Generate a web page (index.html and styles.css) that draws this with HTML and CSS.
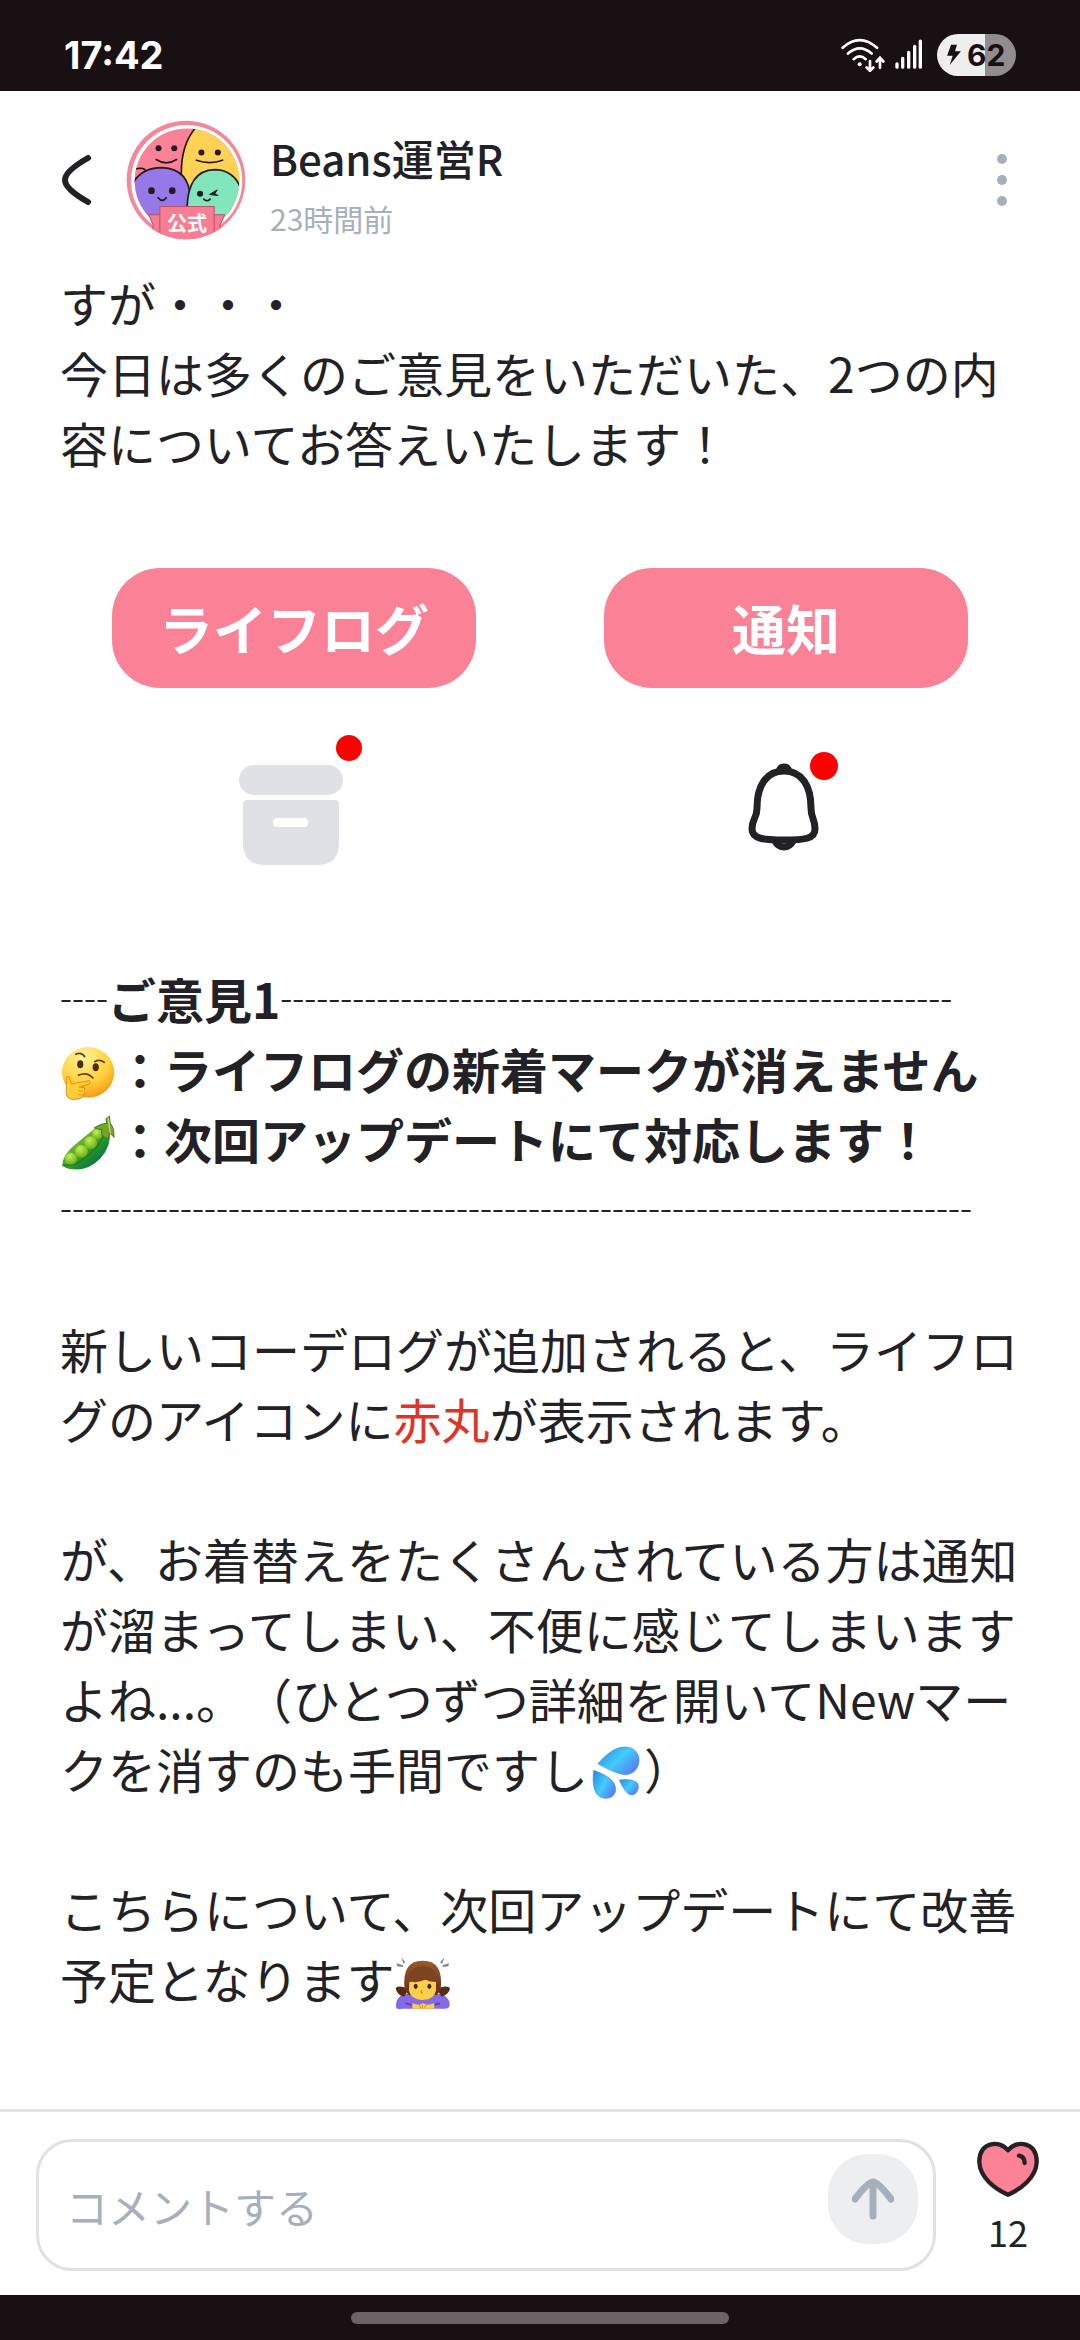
FILE: index.html
```html
<!DOCTYPE html>
<html lang="ja">
<head>
<meta charset="utf-8">
<meta name="viewport" content="width=device-width, initial-scale=1">
<title>Beans運営R</title>
<link rel="stylesheet" href="styles.css">
</head>
<body>
<div class="status">
  <span class="clock">17:42</span>
  <div class="status-icons">
    <svg class="wifi" viewBox="0 0 132 104" fill="none" stroke="#fff" stroke-width="8" stroke-linecap="round" aria-hidden="true">
      <path d="M5 32Q56-14 108 32M21 49Q56 18 92 49M38 66Q56 49 74 66"/>
      <circle cx="56" cy="81" r="6" fill="#fff" stroke="none"/>
      <g stroke="#191014" stroke-width="15"><path d="M87 72V98M117 92V66"/></g>
      <path d="M87 72V100M77 91L87 101L97 91M117 92V64M107 73L117 62L127 73"/>
    </svg>
    <svg class="signal" viewBox="0 0 84 92" fill="none" stroke="#fff" stroke-width="10" stroke-linecap="round" aria-hidden="true">
      <path d="M6 74V84M23 58V84M41 40V84M59 22V84M76 6V84"/>
    </svg>
    <div class="battery">
      <svg class="bolt" viewBox="0 0 42 64" aria-hidden="true"><path d="M12 2H30L24 22H42L8 64L17 36H0Z" fill="#191014"/></svg>
      <span>62</span>
    </div>
  </div>
</div>

<header class="header">
  <button class="icon-button back" type="button" aria-label="戻る">
    <svg viewBox="0 0 30 52" fill="none" stroke="#222226" stroke-width="6" stroke-linecap="round" stroke-linejoin="round"><path d="M26 4Q3 17 3 26T26 48"/></svg>
  </button>
  <svg class="avatar" viewBox="51 34 356 358" role="img" aria-label="Beans公式アイコン">
    <defs>
      <clipPath id="face"><circle cx="232" cy="215" r="156"/></clipPath>
      <clipPath id="disc"><circle cx="229" cy="213" r="177"/></clipPath>
    </defs>
    <circle cx="229" cy="213" r="177" fill="#f2899b"/>
    <circle cx="231" cy="215" r="166" fill="#fff"/>
    <g clip-path="url(#face)" stroke="#221b22" stroke-width="5">
      <rect x="60" y="40" width="340" height="340" fill="#fb8296" stroke="none"/>
      <path d="M262 52Q208 110 216 220L250 300H420V40Z" fill="#ffd154"/>
      <path d="M60 184Q108 170 110 190Q110 210 80 214" fill="#fb8296"/>
      <path d="M60 250Q80 176 158 176Q240 180 242 270V400H60Z" fill="#9678e8"/>
      <path d="M232 300Q234 184 314 182Q380 182 400 260V400H232Z" fill="#82e6bc"/>
    </g>
    <g fill="#221b22">
      <circle cx="147" cy="118" r="9"/><circle cx="194" cy="118" r="9"/>
      <circle cx="275" cy="131" r="9"/><circle cx="324" cy="131" r="9"/>
      <circle cx="126" cy="245" r="10"/><circle cx="188" cy="245" r="10"/>
      <circle cx="271" cy="254" r="9"/>
      <path d="M300 256L322 243L314 254L324 259Z" stroke="#221b22" stroke-width="3" stroke-linejoin="round"/>
    </g>
    <path d="M140 152Q170 172 201 152M260 154Q300 168 338 154M146 266Q158 282 170 266M282 270Q292 280 301 270" fill="none" stroke="#221b22" stroke-width="5" stroke-linecap="round"/>
    <g clip-path="url(#disc)" fill="#f77d92" stroke="#b95068" stroke-width="3">
      <path d="M118 317H160V400H110L132 350Z"/>
      <path d="M344 317H302V400H352L330 350Z"/>
      <path d="M151 292H313V400H151Z"/>
    </g>
    <text class="avatar-text" x="232" y="364" text-anchor="middle">公式</text>
  </svg>
  <div class="author">
    <h1 class="name">Beans運営R</h1>
    <time class="time">23時間前</time>
  </div>
  <button class="icon-button more" type="button" aria-label="メニュー">
    <svg viewBox="0 0 12 54" fill="#a6afbc"><circle cx="6" cy="6" r="5"/><circle cx="6" cy="27" r="5"/><circle cx="6" cy="48" r="5"/></svg>
  </button>
</header>

<main class="post">
  <p>すが・・・<br>今日は多くのご意見をいただいた、2つの内容についてお答えいたします！</p>

  <div class="topics">
    <div class="topic">
      <div class="pill">ライフログ</div>
      <svg class="topic-icon" viewBox="0 0 160 160" fill="#e0e1e5" aria-hidden="true">
        <rect x="25" y="37" width="104" height="30" rx="15"/>
        <path d="M33 72H121Q125 72 125 76V115Q125 137 103 137H51Q29 137 29 115V76Q29 72 33 72Z"/>
        <rect x="59" y="90" width="35" height="9" rx="4" fill="#fff"/>
        <circle cx="135" cy="20" r="13" fill="#f00"/>
      </svg>
    </div>
    <div class="topic">
      <div class="pill">通知</div>
      <svg class="topic-icon" viewBox="0 0 160 160" fill="none" stroke="#222226" stroke-width="7" stroke-linejoin="round" aria-hidden="true">
        <path d="M74 41Q75 39 78 39T82 41" stroke-linecap="round"/>
        <path d="M78 43C60 43 51 58 51 80C51 91 46 90 46 101C46 111 58 112 78 112S109 111 109 101C109 90 105 91 105 80C105 58 96 43 78 43Z"/>
        <path d="M69 113Q72 119 78 119T87 113"/>
        <circle cx="118" cy="38" r="14" fill="#f00" stroke="none"/>
      </svg>
    </div>
  </div>

  <p>┈<b>ご意見1</b>┈┈┈┈┈┈┈┈┈┈┈┈┈┈<br>
    <b><svg class="emoji" viewBox="58 285 163 168" preserveAspectRatio="none" role="img" aria-label="考える顔">
      <defs><radialGradient id="skin" cx=".4" cy=".2" r=".85"><stop offset="0" stop-color="#fff59b"/><stop offset=".6" stop-color="#ffd03c"/><stop offset="1" stop-color="#f5950f"/></radialGradient></defs>
      <circle cx="140" cy="367" r="76" fill="url(#skin)"/>
      <ellipse cx="117" cy="343" rx="9" ry="12" fill="#4d2c12"/><ellipse cx="162" cy="352" rx="9" ry="12" fill="#4d2c12"/>
      <path d="M104 313Q120 305 130 320M159 335Q174 326 187 337M112 376Q136 364 154 384" fill="none" stroke="#6b3e12" stroke-width="5" stroke-linecap="round"/>
      <path d="M78 380Q86 376 89 395L92 402L142 392Q150 396 142 403L120 410Q134 414 129 421Q133 431 125 435Q122 446 104 448H90Q74 442 76 420Z" fill="#ffce38" stroke="#e2931b" stroke-width="3"/>
      <path d="M113 412H126M112 423H125M110 434H122" stroke="#e2931b" stroke-width="3"/>
    </svg>：ライフログの新着マークが消えません</b><br>
    <b><svg class="emoji" viewBox="58 494 163 168" preserveAspectRatio="none" role="img" aria-label="えんどう豆">
      <defs><linearGradient id="pod" x1="0" y1="0" x2="1" y2="1"><stop offset=".3" stop-color="#72b92b"/><stop offset=".65" stop-color="#188b34"/><stop offset="1" stop-color="#0a5161"/></linearGradient>
      <radialGradient id="pea" cx=".4" cy=".3" r=".7"><stop offset="0" stop-color="#c4f04f"/><stop offset="1" stop-color="#6bae20"/></radialGradient></defs>
      <path d="M64 646Q66 612 103 582Q134 555 158 536L203 540Q208 588 176 624Q142 661 98 657Q75 655 64 646Z" fill="url(#pod)"/>
      <path d="M67 644Q98 650 126 626Q180 585 190 540" fill="none" stroke="#247d24" stroke-width="5"/>
      <g fill="url(#pea)"><circle cx="167" cy="551" r="16"/><circle cx="147" cy="577" r="19"/><circle cx="120" cy="603" r="19"/><circle cx="90" cy="625" r="18"/></g>
      <path d="M158 533Q178 520 194 519L192 505L202 498L204 520Q216 530 215 560L202 546L199 565L188 560Q176 556 180 538Z" fill="#76a52a" stroke="#477f20" stroke-width="3"/>
      <path d="M198 502L202 532L205 550" fill="none" stroke="#bfda69" stroke-width="4"/>
    </svg>：次回アップデートにて対応します！</b><br>
    ┈┈┈┈┈┈┈┈┈┈┈┈┈┈┈┈┈┈┈</p>

  <p class="gap">新しいコーデログが追加されると、ライフログのアイコンに<span class="red">赤丸</span>が表示されます。</p>

  <p class="gap">が、お着替えをたくさんされている方は通知が溜まってしまい、不便に感じてしまいますよね...。（ひとつずつ詳細を開いてNewマークを消すのも手間ですし<svg class="emoji" viewBox="24 45 168 168" role="img" aria-label="汗">
      <defs><linearGradient id="water" x1="0" y1="0" x2="1" y2=".7"><stop offset="0" stop-color="#2a83d8"/><stop offset=".55" stop-color="#40cdfd"/><stop offset="1" stop-color="#5a7df2"/></linearGradient></defs>
      <g fill="url(#water)" stroke="#3a92e8" stroke-width="2">
        <path d="M54 101Q96 51 134 51C164 51 177 71 177 91C177 116 159 134 136 134Q108 132 54 101Z"/>
        <path d="M41 121Q108 144 107 178C107 196 92 206 76 205C35 202 38 150 41 121Z"/>
        <path d="M118 150Q158 145 173 160C180 178 168 195 154 195Q136 192 118 150Z"/>
      </g>
    </svg>）</p>

  <p class="gap">こちらについて、次回アップデートにて改善予定となります<svg class="emoji" viewBox="45 45 168 168" role="img" aria-label="お辞儀する女性">
      <defs><linearGradient id="hair" x1="0" y1="0" x2="0" y2="1"><stop offset="0" stop-color="#9a5a2b"/><stop offset="1" stop-color="#623015"/></linearGradient></defs>
      <g fill="#78838c"><path d="M63 52L76 67L71 71ZM50 70L69 76V81L52 79ZM194 52L180 67L186 71ZM207 70L188 76V81L205 79Z"/></g>
      <path d="M49 205Q43 173 72 163Q128 148 184 163Q214 175 208 201Q202 208 188 206H66Q54 209 49 205Z" fill="#8669e6"/>
      <path d="M73 142Q50 136 47 145Q50 165 72 170L85 150ZM183 142Q205 136 210 145Q208 163 185 170L172 150Z" fill="#592b16"/>
      <path d="M76 190Q127 207 180 190" fill="none" stroke="#5842ac" stroke-width="5"/>
      <path d="M74 150Q64 61 128 62Q192 61 182 150L170 165H86Z" fill="url(#hair)"/>
      <path d="M88 126Q128 112 168 126V151Q164 179 128 180Q91 179 87 151Z" fill="#ffcf49"/>
      <path d="M84 124Q86 80 128 78Q170 80 172 124Q148 128 141 120L136 100L131 121Q112 130 84 124Z" fill="#7c4421"/>
      <ellipse cx="107" cy="139" rx="6" ry="8" fill="#45260f"/><ellipse cx="148" cy="139" rx="6" ry="8" fill="#45260f"/>
      <path d="M125 151Q121 154 127 161" fill="none" stroke="#9c6121" stroke-width="3"/>
      <path d="M97 189Q119 200 128 189Q142 200 163 189V206H97Z" fill="#ffce43"/>
      <path d="M117 195L123 205M127 194V205M138 195L133 205" stroke="#d39027" stroke-width="3"/>
    </svg></p>
</main>

<footer class="comment-bar">
  <form class="comment-form">
    <input class="comment-input" type="text" placeholder="コメントする" aria-label="コメントする">
    <button class="send" type="button" aria-label="送信">
      <svg viewBox="0 0 42 42" fill="none" stroke="#a6afbc" stroke-width="7" stroke-linecap="round" stroke-linejoin="round"><path d="M21 38V6M3 21Q16 4 21 4T39 21"/></svg>
    </button>
  </form>
  <button class="like" type="button" aria-label="いいね 12">
    <svg viewBox="0 0 186 168" aria-hidden="true"><path d="M93 28C72-2 6-2 7 63C8 109 54 144 93 161C132 144 178 109 179 63C180-2 114-2 93 28Z" fill="#fb8296" stroke="#272126" stroke-width="13" stroke-linejoin="round"/><path d="M126 44Q143 47 143 66" fill="none" stroke="#272126" stroke-width="13" stroke-linecap="round"/></svg>
    <span>12</span>
  </button>
</footer>
<div class="nav"><div class="nav-handle"></div></div>
</body>
</html>
```
FILE: styles.css
```css
* { box-sizing: border-box; }

body {
  margin: 0;
  min-height: 100vh;
  display: flex;
  flex-direction: column;
  background: #fff;
  color: #222226;
  font-family: "Noto Sans CJK JP", sans-serif;
}

button {
  border: 0;
  padding: 0;
  background: none;
  color: inherit;
  font: inherit;
}

svg { display: block; }

.status {
  height: 91px;
  padding: 18px 64px 0 64px;
  display: flex;
  align-items: center;
  justify-content: space-between;
  background: #191014;
  color: #fff;
  font-family: Inter, sans-serif;
  font-weight: 700;
}

.clock { font-size: 38px; line-height: 48px; }

.status-icons { display: flex; align-items: center; }
.wifi { width: 44px; height: 35px; margin-right: 10px; }
.signal { width: 28px; height: 31px; margin-right: 14px; }

.battery {
  width: 79px;
  height: 42px;
  padding-left: 10px;
  display: flex;
  align-items: center;
  gap: 6px;
  border-radius: 21px;
  background: linear-gradient(90deg, #eee 48px, #918c8e 48px);
  color: #191014;
  font-size: 30px;
  line-height: 42px;
}

.bolt { width: 14px; height: 21px; }

.header {
  height: 176px;
  padding: 2px 60px 0;
  display: flex;
  align-items: center;
}

.icon-button { flex: none; display: grid; place-items: center end; }
.back { width: 32px; height: 90px; margin-right: 34px; }
.back svg { width: 30px; height: 52px; }
.avatar { flex: none; width: 120px; height: 120px; margin-right: 24px; }
.avatar-text { fill: #fff; font-size: 60px; font-weight: 700; }
.author { flex: 1; padding-top: 16px; }
.name { margin: 0; font-size: 42px; line-height: 60px; font-weight: 500; }
.time { display: block; font-size: 30px; line-height: 60px; color: #a6afbc; }
.more { width: 36px; height: 90px; padding-right: 12px; }
.more svg { width: 12px; height: 54px; }

.post {
  flex: 1;
  padding: 0 60px 70px;
  font-size: 48px;
  line-height: 70px;
  text-spacing-trim: space-all;
}

.post p { margin: 0; }
.post .gap { margin-top: 70px; }
.red { color: #e03328; }
.emoji { display: inline-block; width: 56px; height: 56px; vertical-align: -12px; }

.topics {
  padding: 91px 0 75px;
  display: grid;
  grid-template-columns: 1fr 1fr;
  gap: 24px;
}

.topic {
  padding: 0 52px;
  display: flex;
  flex-direction: column;
  align-items: center;
  gap: 40px;
}

.pill {
  align-self: stretch;
  border-radius: 48px;
  background: #fb8296;
  color: #fff;
  font-size: 54px;
  line-height: 120px;
  font-weight: 700;
  text-align: center;
}

.topic-icon { width: 160px; height: 160px; }

.comment-bar {
  padding: 27px 36px 24px;
  display: flex;
  align-items: flex-start;
  gap: 36px;
  border-top: 3px solid #e2e2e7;
}

.comment-form {
  flex: 1;
  height: 132px;
  padding: 12px 15px 12px 27px;
  display: flex;
  align-items: flex-start;
  border: 3px solid #e0e1e5;
  border-radius: 36px;
}

.comment-input {
  flex: 1;
  min-width: 0;
  height: 102px;
  padding: 0;
  border: 0;
  outline: 0;
  background: none;
  color: #222226;
  font-family: inherit;
  font-size: 42px;
}

.comment-input::placeholder { color: #a6afbc; opacity: 1; }

.send {
  flex: none;
  width: 90px;
  height: 90px;
  display: grid;
  place-items: center;
  border-radius: 40px;
  background: #eceef0;
}

.send svg { width: 42px; height: 42px; }

.like {
  flex: none;
  width: 72px;
  padding-top: 2px;
  display: flex;
  flex-direction: column;
  align-items: center;
  gap: 8px;
  font-size: 36px;
  line-height: 52px;
}

.like svg { width: 62px; height: 56px; }

.nav {
  height: 45px;
  padding-top: 17px;
  background: #191014;
}

.nav-handle {
  width: 35%;
  height: 12px;
  margin: 0 auto;
  border-radius: 6px;
  background: #6b6467;
}
```
